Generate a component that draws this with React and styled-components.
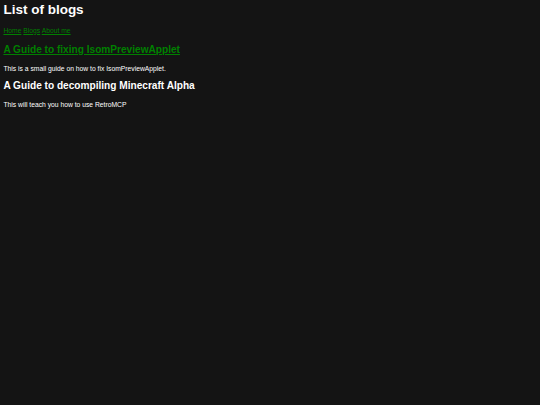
import React from 'react';
import styled, { createGlobalStyle } from 'styled-components';

const GlobalStyle = createGlobalStyle`
  html, body {
    margin: 0;
    background-color: #141414;
  }
  body {
    padding: 1.6px 3.4px;
    color: #ffffff;
    font-family: "Liberation Sans", Arial, sans-serif;
    font-size: 6.75px;
  }
`;

const Page = styled.div`
  display: flex;
  flex-direction: column;
`;

const Title = styled.h1`
  font-size: 13.5px;
  font-weight: bold;
  margin: 0 0 10.2px;
`;

const Nav = styled.nav`
  margin: 0 0 10.3px;
  font-size: 6.75px;
`;

const NavLink = styled.a`
  color: #008000;
  text-decoration: underline;
`;

const Post = styled.section`
  display: flex;
  flex-direction: column;
`;

const PostTitle = styled.h2`
  font-size: 10.125px;
  font-weight: bold;
  margin: 0 0 9.9px;
  color: #ffffff;
`;

const PostLink = styled.a`
  color: #008000;
  text-decoration: underline;
`;

const PostText = styled.p`
  margin: 0 0 7.9px;
  font-size: 6.75px;
`;

const posts = [
  {
    title: 'A Guide to fixing IsomPreviewApplet',
    text: 'This is a small guide on how to fix IsomPreviewApplet.',
    link: true,
  },
  {
    title: 'A Guide to decompiling Minecraft Alpha',
    text: 'This will teach you how to use RetroMCP',
    link: false,
  },
];

const App = () => {
  return (
    <Page>
      <GlobalStyle />
      <Title>List of blogs</Title>
      <Nav>
        <NavLink href="#">Home</NavLink>{' '}
        <NavLink href="#">Blogs</NavLink>{' '}
        <NavLink href="#">About me</NavLink>
      </Nav>
      {posts.map((post, idx) => (
        <Post key={idx}>
          <PostTitle>
            {post.link ? <PostLink href="#">{post.title}</PostLink> : post.title}
          </PostTitle>
          <PostText>{post.text}</PostText>
        </Post>
      ))}
    </Page>
  );
};

export default App;
